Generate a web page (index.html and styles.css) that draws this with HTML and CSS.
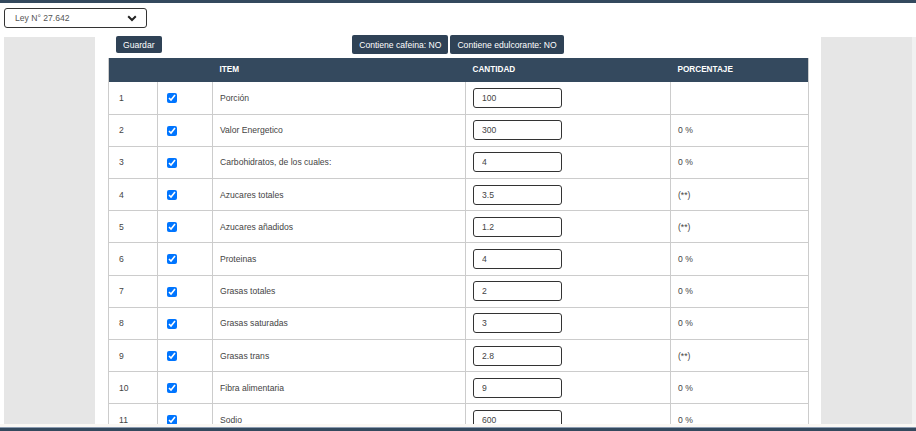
FILE: index.html
```html
<!DOCTYPE html>
<html lang="es">
<head>
<meta charset="utf-8">
<link rel="stylesheet" href="styles.css">
</head>
<body>
<div class="topbar"></div>
<div class="toolbar">
  <div class="select">
    <span>Ley N° 27.642</span>
    <svg class="chev" width="10" height="7" viewBox="0 0 10 7"><path d="M1.2 1.3 L5 5 L8.8 1.3" fill="none" stroke="#222" stroke-width="2"/></svg>
  </div>
</div>
<div class="main">
  <div class="side"></div>
  <div class="center">
    <div class="actions">
      <div class="left"><button class="btn btn-save">Guardar</button></div>
      <div class="mid">
        <button class="btn">Contiene cafeina: NO</button>
        <button class="btn">Contiene edulcorante: NO</button>
      </div>
      <div class="right"></div>
    </div>
    <table class="grid">
      <colgroup>
        <col class="c-num"><col class="c-chk"><col class="c-item"><col class="c-qty"><col class="c-pct">
      </colgroup>
      <thead>
        <tr><th></th><th></th><th>ITEM</th><th>CANTIDAD</th><th>PORCENTAJE</th></tr>
      </thead>
      <tbody>
        <tr><td class="num">1</td><td><input type="checkbox" checked></td><td>Porción</td><td><input class="qty" type="text" value="100"></td><td></td></tr>
        <tr><td class="num">2</td><td><input type="checkbox" checked></td><td>Valor Energetico</td><td><input class="qty" type="text" value="300"></td><td>0 %</td></tr>
        <tr><td class="num">3</td><td><input type="checkbox" checked></td><td>Carbohidratos, de los cuales:</td><td><input class="qty" type="text" value="4"></td><td>0 %</td></tr>
        <tr><td class="num">4</td><td><input type="checkbox" checked></td><td>Azucares totales</td><td><input class="qty" type="text" value="3.5"></td><td>(**)</td></tr>
        <tr><td class="num">5</td><td><input type="checkbox" checked></td><td>Azucares añadidos</td><td><input class="qty" type="text" value="1.2"></td><td>(**)</td></tr>
        <tr><td class="num">6</td><td><input type="checkbox" checked></td><td>Proteinas</td><td><input class="qty" type="text" value="4"></td><td>0 %</td></tr>
        <tr><td class="num">7</td><td><input type="checkbox" checked></td><td>Grasas totales</td><td><input class="qty" type="text" value="2"></td><td>0 %</td></tr>
        <tr><td class="num">8</td><td><input type="checkbox" checked></td><td>Grasas saturadas</td><td><input class="qty" type="text" value="3"></td><td>0 %</td></tr>
        <tr><td class="num">9</td><td><input type="checkbox" checked></td><td>Grasas trans</td><td><input class="qty" type="text" value="2.8"></td><td>(**)</td></tr>
        <tr><td class="num">10</td><td><input type="checkbox" checked></td><td>Fibra alimentaria</td><td><input class="qty" type="text" value="9"></td><td>0 %</td></tr>
        <tr><td class="num">11</td><td><input type="checkbox" checked></td><td>Sodio</td><td><input class="qty" type="text" value="600"></td><td>0 %</td></tr>
      </tbody>
    </table>
  </div>
  <div class="side"></div>
  <div class="scroll"></div>
</div>
<div class="footer"></div>
</body>
</html>
```
FILE: styles.css
```css
html, body {
  margin: 0;
  padding: 0;
}
body {
  width: 916px;
  height: 431px;
  overflow: hidden;
  display: flex;
  flex-direction: column;
  font-family: "Liberation Sans", Arial, sans-serif;
  font-size: 8.6px;
  color: #444;
  background: #fff;
}
.topbar {
  height: 3px;
  background: #34495e;
  flex: none;
}
.toolbar {
  flex: none;
  height: 30px;
  padding: 5px 0 0 4px;
  box-sizing: border-box;
}
.select {
  width: 143px;
  height: 20px;
  box-sizing: border-box;
  border: 1px solid #333;
  border-radius: 3px;
  display: flex;
  align-items: center;
  justify-content: space-between;
  padding: 0 9px 0 10px;
  color: #555;
}
.main {
  flex: 1;
  min-height: 0;
  display: flex;
  padding: 0 0 0 4px;
  overflow: hidden;
}
.side {
  flex: none;
  width: 91px;
  margin-top: 4px;
  background: #e6e6e6;
}
.scroll {
  flex: 1;
  margin-top: 4px;
  background: #f1f1f1;
}
.center {
  flex: none;
  width: 726px;
  padding: 0 13px;
  box-sizing: border-box;
  overflow: hidden;
}
.actions {
  display: grid;
  grid-template-columns: 1fr auto 1fr;
  align-items: center;
  height: 19px;
  padding-top: 2px;
  margin-bottom: 4px;
}
.left {
  padding-left: 8px;
}
.mid {
  display: flex;
  gap: 2px;
}
.btn {
  font-family: "Liberation Sans", Arial, sans-serif;
  font-size: 8.6px;
  color: #fff;
  background: #2f4256;
  border: none;
  border-radius: 2px;
  height: 19px;
  padding: 0 7px;
  margin: 0;
}
.btn-save {
  height: 17px;
  padding: 0 7px;
}
.grid {
  width: 700px;
  border-collapse: collapse;
  table-layout: fixed;
  border-left: 1px solid #ccc;
  border-right: 1px solid #ccc;
}
.c-num { width: 49px; }
.c-chk { width: 55px; }
.c-item { width: 253px; }
.c-qty { width: 205px; }
.c-pct { width: 138px; }
.grid th {
  background: #34495e;
  color: #fff;
  font-weight: bold;
  font-size: 8.2px;
  text-align: left;
  height: 24px;
  padding: 0 0 2px 7px;
  box-sizing: border-box;
}
.grid td {
  height: 32.2px;
  padding: 0 0 0 7px;
  border: 1px solid #ccc;
  border-top: none;
  box-sizing: border-box;
  vertical-align: middle;
  white-space: nowrap;
}
.grid td.num {
  padding-left: 10px;
}
.grid input[type="checkbox"] {
  width: 10px;
  height: 10px;
  margin: 0 0 0 2px;
  vertical-align: middle;
}
.qty {
  width: 89px;
  height: 20px;
  box-sizing: border-box;
  border: 1px solid #333;
  border-radius: 3px;
  padding: 0 0 0 8px;
  font-family: "Liberation Sans", Arial, sans-serif;
  font-size: 8.6px;
  color: #444;
  vertical-align: middle;
}
.footer {
  flex: none;
  height: 7px;
  border-top: 3px solid #fbf8f4;
  box-sizing: border-box;
  background: #34495e;
  box-shadow: inset 0 1px 0 #8b9bb0;
}
```
